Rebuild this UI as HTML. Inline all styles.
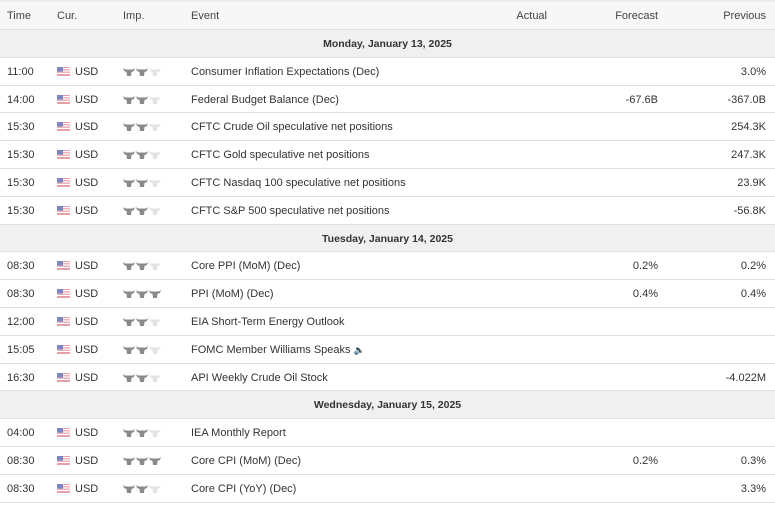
<!DOCTYPE html>
<html><head><meta charset="utf-8"><style>
body{margin:0;width:775px;height:505px;overflow:hidden;background:#fff;font-family:"Liberation Sans",Arial,sans-serif;font-size:11px;color:#333}
.top{height:2px;background:#ececec}
.r{position:relative;height:27.8px;border-bottom:1px solid #e0e0e0;box-sizing:border-box}
.h{background:#f7f7f7;color:#444;height:28px}
.d{background:#f0f0f0;font-weight:bold;color:#333;text-align:center;line-height:29px;font-size:10.5px}
.r span{position:absolute;top:0;line-height:29px;white-space:nowrap}
.r span.fl{top:9px;width:13px;height:9px;line-height:0;display:flex}
.c{left:75px}.r span.i{left:123px;top:9px;line-height:0;display:flex}
.t{left:7px}.fl{left:57px}
.e{left:191px}.a{right:228px}.f{right:117px}.p{right:9px}
svg{display:block}
</style></head><body>
<div class="top"></div>
<div id="rows"></div>
<script>
const flag='<svg width="13" height="9"><rect width="13" height="9" fill="#e8a0a8"/><rect y="1" width="13" height="1.2" fill="#fff"/><rect y="3.4" width="13" height="1.2" fill="#fff"/><rect y="5.8" width="13" height="1.2" fill="#fff"/><rect width="6" height="4.6" fill="#7d86c0"/></svg>';
function bull(c){return '<svg width="12" height="10" viewBox="0 0 12 10" style="margin-right:1px"><path d="M0 0.5 Q1 2.5 3 2.5 L9 2.5 Q11 2.5 12 0.5 L11 4 L8.5 5 L8 9 L4 9 L3.5 5 L1 4Z" fill="'+c+'"/></svg>';}
function imp(n){let s='';for(let k=0;k<3;k++)s+=bull(k<n?'#8a8a8a':'#e4e4e4');return s;}
const D=[
['d','Monday, January 13, 2025'],
['11:00',2,'Consumer Inflation Expectations (Dec)','','','3.0%'],
['14:00',2,'Federal Budget Balance (Dec)','','-67.6B','-367.0B'],
['15:30',2,'CFTC Crude Oil speculative net positions','','','254.3K'],
['15:30',2,'CFTC Gold speculative net positions','','','247.3K'],
['15:30',2,'CFTC Nasdaq 100 speculative net positions','','','23.9K'],
['15:30',2,'CFTC S&amp;P 500 speculative net positions','','','-56.8K'],
['d','Tuesday, January 14, 2025'],
['08:30',2,'Core PPI (MoM) (Dec)','','0.2%','0.2%'],
['08:30',3,'PPI (MoM) (Dec)','','0.4%','0.4%'],
['12:00',2,'EIA Short-Term Energy Outlook','','',''],
['15:05',2,'FOMC Member Williams Speaks <span style="position:static;color:#aaa;font-size:9px">&#x1F508;</span>','','',''],
['16:30',2,'API Weekly Crude Oil Stock','','','-4.022M'],
['d','Wednesday, January 15, 2025'],
['04:00',2,'IEA Monthly Report','','',''],
['08:30',3,'Core CPI (MoM) (Dec)','','0.2%','0.3%'],
['08:30',2,'Core CPI (YoY) (Dec)','','','3.3%']];
let h='<div class="r h"><span class="t">Time</span><span class="c" style="left:57px">Cur.</span><span style="left:123px">Imp.</span><span class="e">Event</span><span class="a">Actual</span><span class="f">Forecast</span><span class="p">Previous</span></div>';
for(const r of D){if(r[0]=='d'){h+='<div class="r d">'+r[1]+'</div>';continue;}
h+='<div class="r"><span class="t">'+r[0]+'</span><span class="fl">'+flag+'</span><span class="c">USD</span><span class="i">'+imp(r[1])+'</span><span class="e">'+r[2]+'</span><span class="a">'+r[3]+'</span><span class="f">'+r[4]+'</span><span class="p">'+r[5]+'</span></div>';}
document.getElementById('rows').innerHTML=h;
</script>
</body></html>
